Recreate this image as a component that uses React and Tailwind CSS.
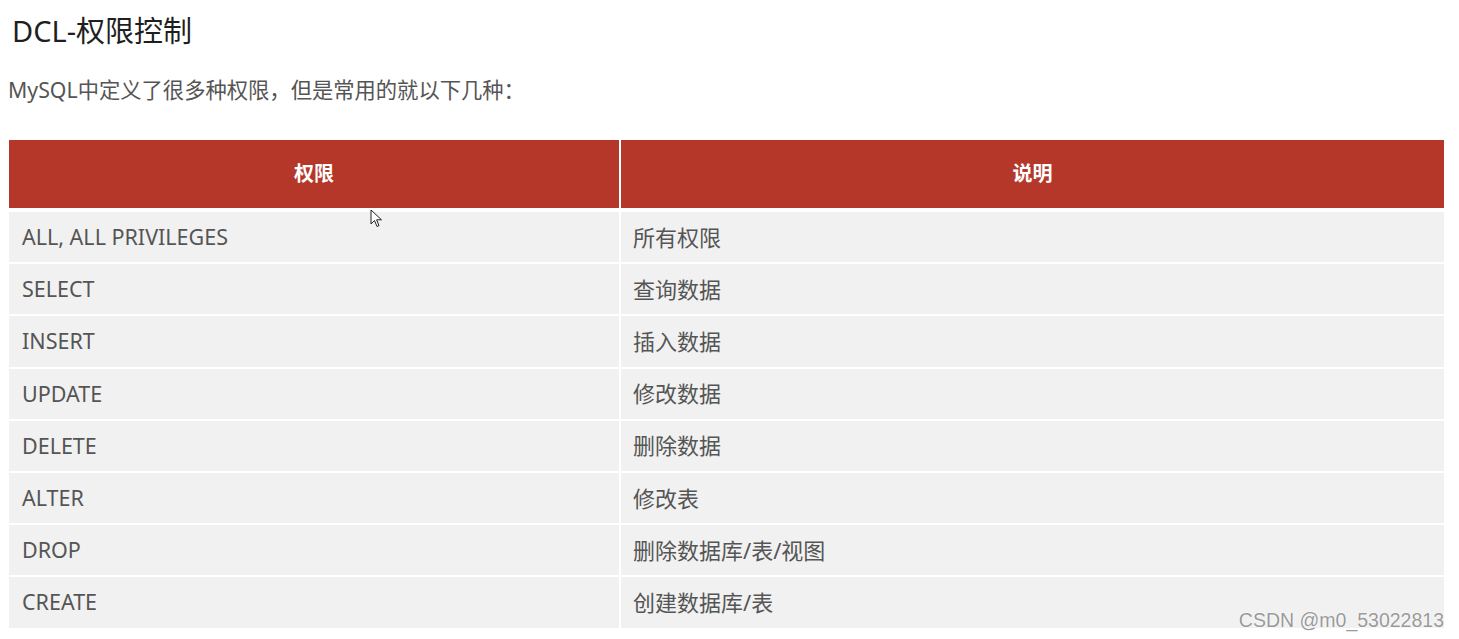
import React from "react";

const rows = [
  ["ALL, ALL PRIVILEGES", "所有权限"],
  ["SELECT", "查询数据"],
  ["INSERT", "插入数据"],
  ["UPDATE", "修改数据"],
  ["DELETE", "删除数据"],
  ["ALTER", "修改表"],
  ["DROP", "删除数据库/表/视图"],
  ["CREATE", "创建数据库/表"],
];

const font = { fontFamily: '"Noto Sans", "Noto Sans CJK SC", sans-serif' };

export default function App() {
  return (
    <div className="relative w-[1459px] h-[639px] overflow-hidden bg-white" style={font}>
      <div className="flex flex-col pl-[9px] pt-[13px]">
        <h1 className="ml-[3px] text-[29px] leading-[36px] text-[#1f1f1f] font-normal">DCL-权限控制</h1>
        <p className="mt-[27px] -ml-[1px] text-[21.3px] leading-[28px] text-[#555555]">
          MySQL中定义了很多种权限，但是常用的就以下几种：
        </p>
        <div className="mt-[36px] flex flex-col w-[1435px]">
          <div className="grid grid-cols-[610px_823px] gap-x-[2px] h-[68px]">
            <div className="bg-[#b5372a] flex items-center justify-center text-white font-bold text-[20px]">权限</div>
            <div className="bg-[#b5372a] flex items-center justify-center text-white font-bold text-[20px]">说明</div>
          </div>
          <div className="mt-[4px] flex flex-col gap-y-[2px]">
            {rows.map(([a, b]) => (
              <div key={a} className="grid grid-cols-[610px_823px] gap-x-[2px] h-[50.2px]">
                <div className="bg-[#f1f1f1] flex items-center pl-[13px] text-[21.5px] text-[#555555]">{a}</div>
                <div className="bg-[#f1f1f1] flex items-center pl-[12px] text-[22px] text-[#555555]">{b}</div>
              </div>
            ))}
          </div>
        </div>
      </div>
      <svg className="absolute left-[370px] top-[209px]" width="13" height="20" viewBox="0 0 13 20">
        <path d="M1 1 L1 15 L4.5 11.5 L7 17.5 L9 16.6 L6.6 10.8 L11.5 10.8 Z" fill="white" stroke="#222" strokeWidth="1" strokeLinejoin="round" />
      </svg>
      <div
        className="absolute right-[15px] top-[607px] text-[19.5px] leading-[26px] text-[#9a9a9a]"
        style={{ fontFamily: '"Liberation Sans", Arial, sans-serif', textShadow: "0 0 2px #ffffff, 0 0 1px #ffffff" }}
      >
        CSDN @m0_53022813
      </div>
    </div>
  );
}
